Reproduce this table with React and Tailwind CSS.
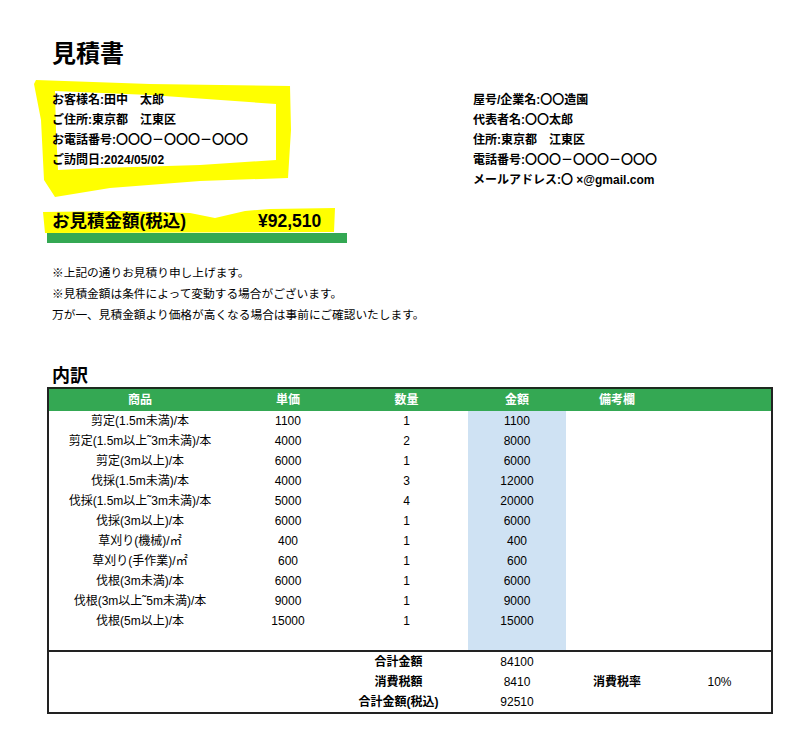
import React from 'react';

const items = [
  { name: '剪定(1.5m未満)/本', price: 1100, qty: 1, total: 1100 },
  { name: '剪定(1.5m以上˜3m未満)/本', price: 4000, qty: 2, total: 8000 },
  { name: '剪定(3m以上)/本', price: 6000, qty: 1, total: 6000 },
  { name: '伐採(1.5m未満)/本', price: 4000, qty: 3, total: 12000 },
  { name: '伐採(1.5m以上˜3m未満)/本', price: 5000, qty: 4, total: 20000 },
  { name: '伐採(3m以上)/本', price: 6000, qty: 1, total: 6000 },
  { name: '草刈り(機械)/㎡', price: 400, qty: 1, total: 400 },
  { name: '草刈り(手作業)/㎡', price: 600, qty: 1, total: 600 },
  { name: '伐根(3m未満)/本', price: 6000, qty: 1, total: 6000 },
  { name: '伐根(3m以上˜5m未満)/本', price: 9000, qty: 1, total: 9000 },
  { name: '伐根(5m以上)/本', price: 15000, qty: 1, total: 15000 },
];

// hand-drawn marker strokes behind the customer block and the total
function Highlights() {
  return (
    <svg className="absolute left-0 top-0 pointer-events-none" width="808" height="749">
      <polygon
        fill="#ffff00"
        points="36,80 150,84 290,86 291,130 288,178 200,181 110,188 55,197 44,180 41,120 34,84"
      />
      <polygon
        fill="#ffffff"
        points="55,91 150,95 276,104 276,160 200,165 100,168 58,170 56,130"
      />
      <polygon
        fill="#ffff00"
        points="43,212 120,211 190,213 215,218 245,211 270,209 335,208 334,232 45,233"
      />
    </svg>
  );
}

function Row({ cells, summary = false }) {
  return (
    <div className="flex h-[20px] items-center">
      <div className="w-[182px] text-center">{cells[0]}</div>
      <div className="w-[114px] text-center">{cells[1]}</div>
      <div className={`w-[123px] text-center ${summary ? 'pr-[16px]' : ''}`}>{cells[2]}</div>
      <div className={`w-[98px] h-full flex items-center justify-center ${summary ? '' : 'bg-[#cfe2f3]'}`}>{cells[3]}</div>
      <div className="w-[102px] text-center">{cells[4]}</div>
      <div className="w-[103px] text-center">{cells[5]}</div>
    </div>
  );
}

export default function App() {
  return (
    <div className="relative w-[808px] h-[749px] bg-white text-black font-['Liberation_Sans','Noto_Sans_CJK_JP',sans-serif]">
      <Highlights />
      <div className="relative pl-[47px] pt-[40px]">
        <h1 className="pl-[5px] text-[24px] leading-[28px] font-bold">見積書</h1>

        <div className="mt-[22px] flex text-[12px] leading-[20px] font-bold">
          <div className="w-[426px] pl-[5px]">
            <div>お客様名:田中　太郎</div>
            <div>ご住所:東京都　江東区</div>
            <div>お電話番号:〇〇〇－〇〇〇－〇〇〇</div>
            <div>ご訪問日:2024/05/02</div>
          </div>
          <div>
            <div>屋号/企業名:〇〇造園</div>
            <div>代表者名:〇〇太郎</div>
            <div>住所:東京都　江東区</div>
            <div>電話番号:〇〇〇－〇〇〇－〇〇〇</div>
            <div>メールアドレス:〇 ×@gmail.com</div>
          </div>
        </div>

        <div className="mt-[20px] flex h-[23px] items-center pl-[5px] text-[17.5px] font-bold">
          <span className="w-[206px]">お見積金額(税込)</span>
          <span>¥92,510</span>
        </div>
        <div className="h-[10px] w-[300px] bg-[#34a853]" />

        <div className="mt-[19px] pl-[5px] text-[11.7px] leading-[21px]">
          <div>※上記の通りお見積り申し上げます。</div>
          <div>※見積金額は条件によって変動する場合がございます。</div>
          <div>万が一、見積金額より価格が高くなる場合は事前にご確認いたします。</div>
        </div>

        <h2 className="mt-[40px] pl-[5px] text-[18px] leading-[22px] font-bold">内訳</h2>

        <div className="w-[726px] border-x-2 border-b-2 border-[#222] text-[12px]">
          <div className="flex h-[24px] items-center border-t-2 border-[#1d2b1f] bg-[#34a853] font-bold text-white">
            <div className="w-[182px] text-center">商品</div>
            <div className="w-[114px] text-center">単価</div>
            <div className="w-[123px] text-center">数量</div>
            <div className="w-[98px] text-center">金額</div>
            <div className="w-[102px] text-center">備考欄</div>
            <div className="w-[103px]" />
          </div>

          {items.map((it) => (
            <Row key={it.name} cells={[it.name, it.price, it.qty, it.total, '', '']} />
          ))}
          <div className="flex h-[19px]">
            <div className="ml-[419px] w-[98px] bg-[#cfe2f3]" />
          </div>

          <div className="border-t-2 border-[#222]">
            <Row summary cells={['', '', <span className="font-bold">合計金額</span>, '84100', '', '']} />
            <Row summary cells={['', '', <span className="font-bold">消費税額</span>, '8410', <span className="font-bold">消費税率</span>, '10%']} />
            <Row summary cells={['', '', <span className="font-bold">合計金額(税込)</span>, '92510', '', '']} />
          </div>
        </div>
      </div>
    </div>
  );
}
